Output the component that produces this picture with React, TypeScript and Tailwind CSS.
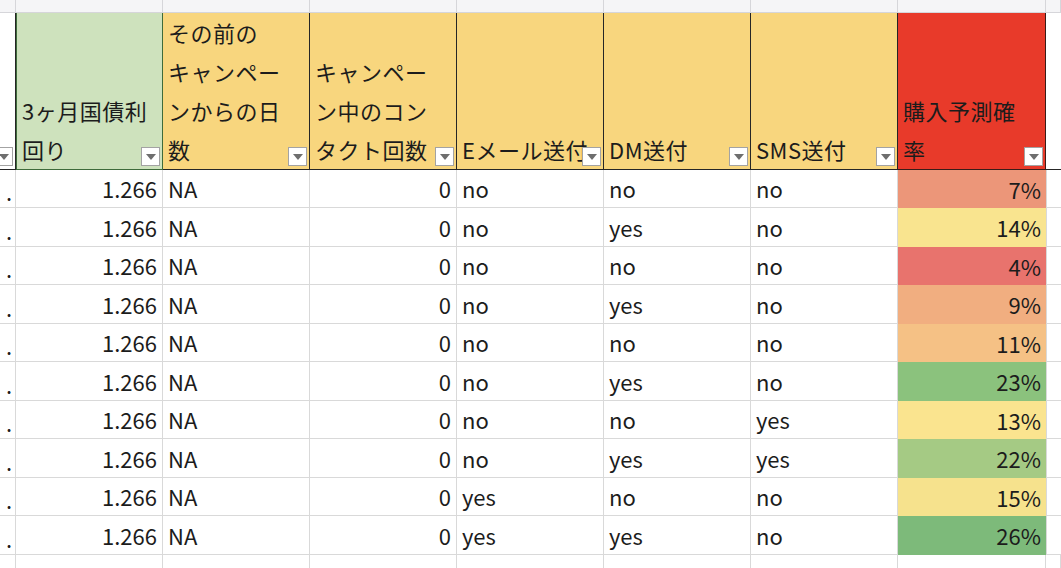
import React from 'react';

const font = { fontFamily: '"Noto Sans CJK JP", "Noto Sans", sans-serif' };

const rows = [
    { e: 'no', dm: 'no', sms: 'no', p: '7%', bg: 'bg-[#ec9679]' },
    { e: 'no', dm: 'yes', sms: 'no', p: '14%', bg: 'bg-[#f9e48f]' },
    { e: 'no', dm: 'no', sms: 'no', p: '4%', bg: 'bg-[#e8736d]' },
    { e: 'no', dm: 'yes', sms: 'no', p: '9%', bg: 'bg-[#f1ae80]' },
    { e: 'no', dm: 'no', sms: 'no', p: '11%', bg: 'bg-[#f5c185]' },
    { e: 'no', dm: 'yes', sms: 'no', p: '23%', bg: 'bg-[#8bc27d]' },
    { e: 'no', dm: 'no', sms: 'yes', p: '13%', bg: 'bg-[#fae48f]' },
    { e: 'no', dm: 'yes', sms: 'yes', p: '22%', bg: 'bg-[#a5ca84]' },
    { e: 'yes', dm: 'no', sms: 'no', p: '15%', bg: 'bg-[#f6e28d]' },
    { e: 'yes', dm: 'yes', sms: 'no', p: '26%', bg: 'bg-[#7dba7a]' },
];

const FilterButton = () => (
    <div className="absolute right-[2px] bottom-[3px] w-[19px] h-[19px] bg-white border border-[#a3a3a3] flex items-center justify-center">
        <svg width="10" height="6" viewBox="0 0 10 6">
            <path d="M0 0 L10 0 L5 6 Z" fill="#6e6e6e" />
        </svg>
    </div>
);

const HeaderCell = ({ lines, className }: { lines: string[], className: string }) => (
    <div className={`relative h-[157px] flex flex-col justify-end pl-[5px] text-[22px] leading-[39px] tracking-[0.5px] text-[#1c1c1c] whitespace-nowrap overflow-visible ${className}`}>
        {lines.map((l, i) => <div key={i}>{l}</div>)}
        <FilterButton />
    </div>
);

const Cell = ({ children, right, className = '' }: { children?: React.ReactNode, right?: boolean, className?: string }) => (
    <div className={`flex items-center px-[5px] text-[22px] text-[#1c1c1c] whitespace-nowrap overflow-hidden ${right ? 'justify-end' : 'justify-start'} ${className}`}>
        {children}
    </div>
);

const App: React.FC = () => {
    const grid = 'grid grid-cols-[16px_147px_147px_147px_147px_147px_147px_148px_15px]';
    return (
        <div className="w-[1061px] h-[568px] overflow-hidden bg-white" style={font}>
            {/* column letters strip, mostly cropped */}
            <div className={`${grid} h-[13px]`}>
                {Array.from({ length: 9 }).map((_, i) => (
                    <div key={i} className="bg-[#f5f5f7] border-r border-b border-[#d6d6da]" />
                ))}
            </div>

            {/* header row */}
            <div className={grid}>
                <div className="relative h-[157px] bg-white border-r border-b border-[#262626]">
                    <FilterButton />
                </div>
                <HeaderCell lines={['3ヶ月国債利', '回り']} className="bg-[#cee2bd] border border-t-0 border-[#3e6b3b]" />
                <HeaderCell lines={['その前の', 'キャンペー', 'ンからの日', '数']} className="bg-[#f8d67e] border-r border-b border-[#262626]" />
                <HeaderCell lines={['キャンペー', 'ン中のコン', 'タクト回数']} className="bg-[#f8d67e] border-r border-b border-[#262626]" />
                <HeaderCell lines={['Eメール送付']} className="bg-[#f8d67e] border-r border-b border-[#262626] overflow-hidden" />
                <HeaderCell lines={['DM送付']} className="bg-[#f8d67e] border-r border-b border-[#262626]" />
                <HeaderCell lines={['SMS送付']} className="bg-[#f8d67e] border-r border-b border-[#262626]" />
                <HeaderCell lines={['購入予測確', '率']} className="bg-[#e83a2a] border-r border-b border-[#3a1c18]" />
                <div className="h-[157px] bg-white border-b border-[#262626]" />
            </div>

            {/* data rows */}
            {rows.map((r, i) => (
                <div key={i} className={`${grid} ${i % 2 === 0 ? 'h-[38px]' : 'h-[39px]'}`}>
                    <Cell className="border-r border-b border-[#d9d9d9] px-0 pl-[6px] pt-[6px]">.</Cell>
                    <Cell right className="border-r border-b border-[#d9d9d9]">1.266</Cell>
                    <Cell className="border-r border-b border-[#d9d9d9]">NA</Cell>
                    <Cell right className="border-r border-b border-[#d9d9d9]">0</Cell>
                    <Cell className="border-r border-b border-[#d9d9d9]">{r.e}</Cell>
                    <Cell className="border-r border-b border-[#d9d9d9]">{r.dm}</Cell>
                    <Cell className="border-r border-b border-[#d9d9d9]">{r.sms}</Cell>
                    <Cell right className={r.bg}>{r.p}</Cell>
                    <div className="border-l border-b border-[#d9d9d9]" />
                </div>
            ))}

            {/* empty row below */}
            <div className={`${grid} h-[20px]`}>
                {Array.from({ length: 9 }).map((_, i) => (
                    <div key={i} className="border-r border-[#d9d9d9]" />
                ))}
            </div>
        </div>
    );
};

export default App;
